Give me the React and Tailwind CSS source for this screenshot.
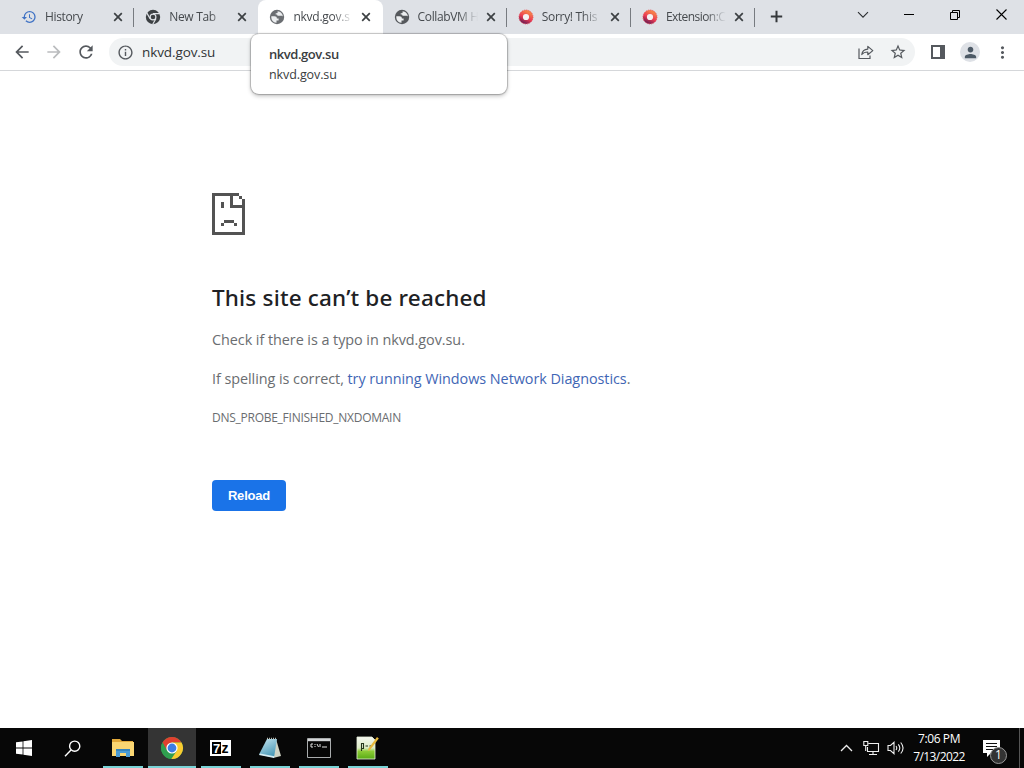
import clsx from "clsx";
import {
  MdArrowBack,
  MdArrowForward,
  MdHistory,
  MdInfoOutline,
  MdMoreVert,
  MdPerson,
  MdRefresh,
  MdStarBorder,
} from "react-icons/md";

function GlobeIcon({ className }) {
  return (
    <svg className={className} viewBox="0 0 16 16">
      <circle cx="8" cy="8" r="7.2" fill="currentColor" />
      <path
        d="M2.3 7.3h3.2c1.5 0 2.4.8 2.4 2.2h1.7v2H7.5v2.2C4.3 13.9 2 11.2 2.3 7.3zM8.6 2.2c2.9.1 5.2 2.5 5.2 5.3-.6-.7-1.5-.7-2.3-.7H9.4c-.8 0-1.3-.5-1.3-1.3H6.7V4.2h1.2c.5 0 .7-.4.7-.8z"
        fill="#eceef0"
      />
    </svg>
  );
}

function ChromeMonoIcon() {
  return (
    <svg className="h-4 w-4" viewBox="0 0 16 16">
      <circle cx="8" cy="8" r="7.2" fill="#3c4043" />
      <circle cx="8" cy="8" r="2.9" fill="none" stroke="#dee1e6" strokeWidth="1.2" />
      <path
        d="M8 4.7h6.7M5.1 9.7 1.8 3.9M10.9 9.7l-3.3 5.8"
        stroke="#dee1e6"
        strokeWidth="1.2"
      />
    </svg>
  );
}

function RingIcon() {
  return (
    <svg className="h-4 w-4" viewBox="0 0 16 16">
      <defs>
        <linearGradient id="ring" x1="0.2" y1="1" x2="0.7" y2="0">
          <stop offset="0" stopColor="#7c2152" />
          <stop offset="0.45" stopColor="#ec3b54" />
          <stop offset="1" stopColor="#f5804a" />
        </linearGradient>
      </defs>
      <circle cx="8" cy="8" r="5.1" fill="#f4f2f4" stroke="url(#ring)" strokeWidth="4" />
      <circle
        cx="8"
        cy="8"
        r="7"
        fill="none"
        stroke="#e94652"
        strokeWidth="0.8"
        strokeDasharray="1.2 1"
      />
    </svg>
  );
}

const tabs = [
  { title: "History", icon: <MdHistory className="h-4 w-4 text-[#3f72c4]" />, tracking: "tracking-[-0.35px]", separator: true },
  { title: "New Tab", icon: <ChromeMonoIcon />, tracking: "tracking-[-0.3px]" },
  { title: "nkvd.gov.s", icon: <GlobeIcon className="h-4 w-4 text-[#6b6e72]" />, tracking: "tracking-[-0.25px]", active: true },
  { title: "CollabVM H", icon: <GlobeIcon className="h-4 w-4 text-[#55585c]" />, tracking: "tracking-[-0.35px]", separator: true },
  { title: "Sorry! This", icon: <RingIcon />, tracking: "tracking-[-0.3px]", separator: true },
  { title: "Extension:C", icon: <RingIcon />, tracking: "tracking-[-0.55px]", separator: true },
];

function Tab({ tab }) {
  return (
    <div
      className={clsx(
        "flex h-[34px] w-[124.2px] shrink-0 items-center pl-[11px]",
        tab.active && "rounded-t-lg bg-white",
        tab.separator &&
          "bg-[linear-gradient(#777b80,#777b80)] bg-[length:1px_19px] bg-[position:right_8px] bg-no-repeat"
      )}
    >
      {tab.icon}
      <span
        className={clsx(
          "ml-2 w-[61px] whitespace-nowrap text-[12px] text-[#45494d] [mask-image:linear-gradient(to_right,black_40px,transparent_60px)]",
          tab.tracking
        )}
      >
        {tab.title}
      </span>
      <svg className="ml-[7px] h-[10px] w-[10px]" viewBox="0 0 10 10">
        <path d="M1.2 1.2 8.8 8.8M8.8 1.2 1.2 8.8" stroke="#3c4043" strokeWidth="1.7" />
      </svg>
    </div>
  );
}

function TabStrip() {
  return (
    <div className="flex h-[34px] bg-[#dee1e6] pl-[10px]">
      {tabs.map((tab) => (
        <Tab key={tab.title} tab={tab} />
      ))}
      <svg className="ml-[15px] mt-[10px] h-[13px] w-[13px]" viewBox="0 0 13 13">
        <path d="M6.5 .8v11.4M.8 6.5h11.4" stroke="#35383b" strokeWidth="2" />
      </svg>
      <div className="ml-auto flex h-[29px] items-center">
        <div className="flex w-[46px] justify-center">
          <svg className="h-[8px] w-[12px]" viewBox="0 0 12 8" fill="none" stroke="#2b2e31" strokeWidth="1.1">
            <path d="m1 1.2 5 5 5-5" />
          </svg>
        </div>
        <div className="flex w-[46px] justify-center">
          <div className="h-px w-[10px] bg-black" />
        </div>
        <div className="flex w-[46px] justify-center">
          <svg className="h-[10px] w-[10px]" viewBox="0 0 10 10" fill="none" stroke="#000">
            <path d="M.5 2.5h7v7h-7zM2.5 2.5v-2h7v7h-2" />
          </svg>
        </div>
        <div className="flex w-[46px] justify-center">
          <svg className="h-[11px] w-[11px]" viewBox="0 0 11 11" stroke="#000" strokeWidth="1.1">
            <path d="m.5.5 10 10m0-10-10 10" />
          </svg>
        </div>
      </div>
    </div>
  );
}

function Toolbar() {
  return (
    <div className="flex h-[37px] items-center border-b border-[#d5d7da] bg-white pl-3 text-[#55595e]">
      <MdArrowBack className="h-5 w-5" />
      <MdArrowForward className="ml-3 h-5 w-5 text-[#babcbe]" />
      <MdRefresh className="ml-3 h-5 w-5" />
      <div className="ml-[13px] flex h-7 w-[806px] items-center rounded-full bg-[#f1f3f4] pl-2">
        <MdInfoOutline className="h-[17px] w-[17px]" />
        <span className="ml-2 text-[13.5px] tracking-[-0.1px] text-[#303336]">nkvd.gov.su</span>
        <svg className="ml-auto h-4 w-4" viewBox="0 0 16 16" fill="none" stroke="currentColor" strokeWidth="1.2">
          <path d="M1 4.5v10h11v-3" />
          <path d="M3.8 10.5c.4-3.6 2.3-5.2 6-5.4V2.4l5 4.2-5 4.1V8c-2.7 0-4.5.6-6 2.5z" strokeLinejoin="round" />
        </svg>
        <MdStarBorder className="ml-[15px] mr-2 h-[18px] w-[18px]" />
      </div>
      <svg className="ml-4 h-[14px] w-[14px]" viewBox="0 0 14 14">
        <path d="M0 0h14v14H0zM2 2v10h7V2z" fill="currentColor" fillRule="evenodd" />
      </svg>
      <div className="ml-[15px] flex h-5 w-5 items-center justify-center rounded-full bg-[#dee1e6]">
        <MdPerson className="h-[17px] w-[17px] text-[#4d5a66]" />
      </div>
      <MdMoreVert className="ml-[13px] h-[19px] w-[19px]" />
    </div>
  );
}

function TabTooltip() {
  return (
    <div className="absolute left-[251px] top-[34px] h-[60px] w-[256px] rounded-lg bg-white pl-[18px] pt-[10px] shadow-[0_0_1px_1px_rgba(0,0,0,0.22),0_2px_4px_rgba(0,0,0,0.25)]">
      <p className="text-[13px] font-semibold leading-5 tracking-[-0.44px] text-[#3a3d41]">nkvd.gov.su</p>
      <p className="text-[12.5px] leading-[21px] tracking-[-0.1px] text-[#3a3d41]">nkvd.gov.su</p>
    </div>
  );
}

function ErrorPage() {
  return (
    <main className="flex-1 bg-white pl-[212px] pt-[122px] text-[#6a6d70]">
      <svg className="h-[42px] w-[33px]" viewBox="0 0 33 42" fill="#535353" shapeRendering="crispEdges">
        <path d="M0 0h27v3h-6v9h12v3H18V3H3v36h27V15h3v27H0z" />
        <path d="M27 3h3v3h-3zM30 6h3v12h-3zM9 9h3v6H9zM12 27h10v3H12zM9 30h3v3H9zM22 30h3v3h-3z" />
      </svg>
      <h1 className="mt-[48px] font-['Noto_Sans',sans-serif] text-[22.5px] font-medium leading-[30px] tracking-[0.18px] text-[#202124]">
        This site can’t be reached
      </h1>
      <p className="mt-[15px] text-[14.4px] leading-6 tracking-[-0.05px]">Check if there is a typo in nkvd.gov.su.</p>
      <p className="mt-[15px] text-[14.4px] leading-6 tracking-[-0.05px]">
        If spelling is correct, <a className="text-[#3f66b5]">try running Windows Network Diagnostics</a>.
      </p>
      <p className="mt-[15px] text-[12px] leading-6 tracking-[-0.26px]">DNS_PROBE_FINISHED_NXDOMAIN</p>
      <button className="mt-[50px] flex h-[31px] w-[74px] items-center justify-center rounded-[4px] bg-[#1a73e8] font-['Liberation_Sans',sans-serif] text-[13px] font-bold tracking-[-0.2px] text-white">
        Reload
      </button>
    </main>
  );
}

function FolderIcon() {
  return (
    <svg className="h-[22px] w-[24px]" viewBox="0 0 24 22">
      <path d="M1 2h8l2 2h11v15H1z" fill="#e2a93a" />
      <path d="M1 5h22v14H1z" fill="#fad672" />
      <path d="M5 20v-8h14v8h-4v-4H9v4z" fill="#4b9bd3" />
      <path d="M5 12h14v2H5z" fill="#3584bd" />
    </svg>
  );
}

function ChromeIcon() {
  return (
    <svg className="h-[24px] w-[24px]" viewBox="0 0 24 24">
      <circle cx="12" cy="12" r="11" fill="#2f9e4f" />
      <path d="M2.5 6.5A11 11 0 0 1 21.5 6.5H12L7 15z" fill="#e0402f" />
      <path d="M2.5 6.5 7.2 14.8 12 17.5l-1.5 5.4A11 11 0 0 1 2.5 6.5z" fill="#2f9e4f" />
      <path d="M12 6.5h9.5A11 11 0 0 1 11.3 23l5.5-8.3z" fill="#fbcb30" />
      <circle cx="12" cy="12" r="5.6" fill="#fff" />
      <circle cx="12" cy="12" r="4.4" fill="#3d7de4" />
    </svg>
  );
}

function SevenZipIcon() {
  return (
    <div className="mr-px flex h-[16px] w-[21px] items-center bg-white pl-[2px] font-['Liberation_Sans',sans-serif] font-bold">
      <div className="flex h-[12px] w-[9px] items-center justify-center bg-black text-[13px] leading-none text-white">
        7
      </div>
      <div className="flex h-[12px] w-[8px] items-center justify-center text-[14px] leading-none text-black">
        z
      </div>
    </div>
  );
}

function NotepadIcon() {
  return (
    <svg className="h-[24px] w-[24px]" viewBox="0 0 24 24">
      <defs>
        <linearGradient id="pad" x1="0" y1="0" x2="0.5" y2="1">
          <stop offset="0" stopColor="#c9e8f2" />
          <stop offset="1" stopColor="#4b9ab8" />
        </linearGradient>
      </defs>
      <path d="m18 3 5 17-8 2z" fill="#cfd3c4" />
      <path d="M9 3h10l-3 18.5-15-3z" fill="url(#pad)" />
      <path d="m1 19 15 3 .4-1.8L2 17.4z" fill="#d7edf3" />
      <path d="M9 2.5h10" stroke="#b8b9ae" strokeWidth="1.5" strokeDasharray="1 1" />
    </svg>
  );
}

function TerminalIcon() {
  return (
    <svg className="mr-px h-[20px] w-[24px]" viewBox="0 0 24 20">
      <path d="M.5.5h23v19H.5z" fill="#060606" stroke="#a9acad" />
      <path d="M1 1h22v2.2H1z" fill="#d3d6d8" />
      <path
        d="M6 6H4v3h2M8 6v1m0 1v1M10 6l1.5 3M13 6v3M15 9h5"
        fill="none"
        stroke="#e2e2e2"
        strokeWidth="1"
      />
    </svg>
  );
}

function EditorIcon() {
  return (
    <svg className="mr-[2px] h-[26px] w-[24px]" viewBox="0 0 24 26">
      <defs>
        <linearGradient id="page" x1="0" y1="0" x2="0" y2="1">
          <stop offset="0" stopColor="#f4f7ef" />
          <stop offset="0.5" stopColor="#dcebc4" />
          <stop offset="0.65" stopColor="#8ccb36" />
          <stop offset="1" stopColor="#58ab14" />
        </linearGradient>
      </defs>
      <path d="M2 2h15l3 3v19H2z" fill="url(#page)" stroke="#e8f1dc" strokeWidth="0.8" />
      <path d="M6.5 8v8M6.5 8.5h2v5h-2M10.5 11H13M14.5 11H17" fill="none" stroke="#26361b" strokeWidth="1.1" />
      <path d="m22 2 1.8 1.5L15 15l-2 1 .5-2.4z" fill="#e8b83a" />
    </svg>
  );
}

const apps = [
  { name: "explorer", icon: <FolderIcon />, bar: "w-10" },
  { name: "chrome", icon: <ChromeIcon />, bar: "w-12", focused: true },
  { name: "7zip", icon: <SevenZipIcon />, bar: "w-10" },
  { name: "notepad", icon: <NotepadIcon />, bar: "w-10" },
  { name: "cmd", icon: <TerminalIcon />, bar: "w-10" },
  { name: "editor", icon: <EditorIcon />, bar: "w-10" },
];

function Taskbar() {
  return (
    <footer className="flex h-10 bg-[#070707] text-white">
      <div className="flex w-12 items-center justify-center">
        <svg className="h-4 w-4" viewBox="0 0 16 16" fill="#fff">
          <path d="M0 2.3 6.6 1.4v6.2H0zM7.4 1.3 16 0v7.6H7.4zM0 8.4h6.6v6.2L0 13.7zM7.4 8.4H16V16l-8.6-1.3z" />
        </svg>
      </div>
      <div className="flex w-12 items-center justify-center">
        <svg className="h-[17px] w-[17px]" viewBox="0 0 17 17" fill="none" stroke="#fff" strokeWidth="1.4">
          <circle cx="10.7" cy="6.2" r="5.1" />
          <path d="M7 10 1 16.2" />
        </svg>
      </div>
      <div className="ml-[3px] flex gap-[1px]">
        {apps.map((app) => (
          <div
            key={app.name}
            className={clsx("flex h-10 w-12 flex-col items-center", app.focused && "bg-[#343434]")}
          >
            <div className="flex flex-1 items-center pt-[2px]">{app.icon}</div>
            <div className={clsx("h-[2px] bg-[#79d3d6]", app.bar)} />
          </div>
        ))}
      </div>
      <div className="ml-auto flex items-center">
        <svg className="h-[8px] w-[13px]" viewBox="0 0 13 8" fill="none" stroke="#eee" strokeWidth="1.3">
          <path d="m1 7 5.5-5.5L12 7" />
        </svg>
        <svg className="ml-[10px] h-[16px] w-[17px]" viewBox="0 0 17 16" fill="none" stroke="#eee" strokeWidth="1.1">
          <path d="M5.5 3.5h10v8h-11V7M10 11.5v3M6 14.5h8M.8 1.5h4v4h-4zM2.7 5.5v5.5" />
        </svg>
        <svg className="ml-[7px] h-[16px] w-[18px]" viewBox="0 0 18 16" fill="none" stroke="#eee" strokeWidth="1.1">
          <path d="M1 5.5h2.5L7 2.3v11.4l-3.5-3.2H1zM9 6q1.5 2 0 4M11.3 4.3q3 3.7 0 7.4M13.7 2.5q4.7 5.5 0 11" />
        </svg>
        <div className="ml-[6px] w-[56px] whitespace-nowrap text-center text-[12px] leading-[18px]">
          <p className="tracking-[-0.4px]">7:06 PM</p>
          <p className="tracking-[-0.6px]">7/13/2022</p>
        </div>
        <div className="relative ml-[16px] mt-[7px] h-6 w-[25px]">
          <svg className="h-[17px] w-[17px]" viewBox="0 0 17 17">
            <path d="M0 0h17v13h-9l-4 4v-4H0z" fill="#fff" />
            <path d="M3 3.5h11M3 6.5h11M3 9.5h8" stroke="#111" strokeWidth="1.2" />
          </svg>
          <div className="absolute left-[7px] top-[7px] flex h-[17px] w-[17px] items-center justify-center rounded-full border border-[#999] bg-[#333] text-[12px] leading-none">
            1
          </div>
        </div>
        <div className="ml-[11px] mr-[4px] h-10 w-px bg-[#555]" />
      </div>
    </footer>
  );
}

export default function App() {
  return (
    <div className="relative flex h-[768px] w-[1024px] flex-col overflow-hidden bg-white font-['Open_Sans','Noto_Sans',sans-serif]">
      <TabStrip />
      <Toolbar />
      <ErrorPage />
      <Taskbar />
      <TabTooltip />
    </div>
  );
}
